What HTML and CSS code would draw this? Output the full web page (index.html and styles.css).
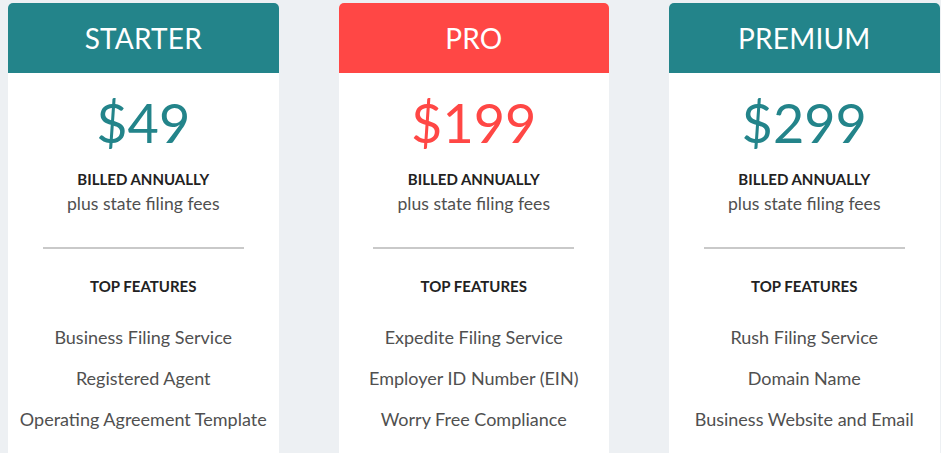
FILE: index.html
```html
<!DOCTYPE html>
<html lang="en">
<head>
<meta charset="utf-8">
<title>Pricing</title>
<link rel="stylesheet" href="styles.css">
</head>
<body>
<div class="plans">
  <div class="card">
    <div class="card-head teal">STARTER</div>
    <div class="price teal-text">$49</div>
    <div class="billed">BILLED ANNUALLY</div>
    <div class="fees">plus state filing fees</div>
    <div class="divider"></div>
    <div class="top">TOP FEATURES</div>
    <ul class="features">
      <li>Business Filing Service</li>
      <li>Registered Agent</li>
      <li>Operating Agreement Template</li>
    </ul>
  </div>
  <div class="card">
    <div class="card-head red">PRO</div>
    <div class="price red-text">$199</div>
    <div class="billed">BILLED ANNUALLY</div>
    <div class="fees">plus state filing fees</div>
    <div class="divider"></div>
    <div class="top">TOP FEATURES</div>
    <ul class="features">
      <li>Expedite Filing Service</li>
      <li>Employer ID Number (EIN)</li>
      <li>Worry Free Compliance</li>
    </ul>
  </div>
  <div class="card">
    <div class="card-head teal">PREMIUM</div>
    <div class="price teal-text">$299</div>
    <div class="billed">BILLED ANNUALLY</div>
    <div class="fees">plus state filing fees</div>
    <div class="divider"></div>
    <div class="top">TOP FEATURES</div>
    <ul class="features">
      <li>Rush Filing Service</li>
      <li>Domain Name</li>
      <li>Business Website and Email</li>
    </ul>
  </div>
</div>
</body>
</html>
```
FILE: styles.css
```css
html, body {
  margin: 0;
  padding: 0;
  background: #edf0f3;
  font-family: Lato, "Open Sans", sans-serif;
  overflow: hidden;
}
.plans {
  display: grid;
  grid-template-columns: 270.5px 270.5px 270.5px;
  column-gap: 60px;
  padding: 3px 0 0 8px;
  height: 450px;
}
.card {
  background: #fff;
  border-radius: 5px 5px 0 0;
  text-align: center;
  overflow: hidden;
}
.card-head {
  height: 70px;
  display: flex;
  align-items: center;
  justify-content: center;
  color: #fff;
  font-size: 28px;
  font-weight: 400;
  letter-spacing: 0.2px;
}
.teal { background: #23848a; }
.red { background: #ff4745; }
.teal-text { color: #23848a; }
.red-text { color: #ff4745; }
.price {
  font-size: 54px;
  line-height: 64px;
  margin-top: 18px;
}
.billed {
  margin-top: 15px;
  font-size: 15px;
  font-weight: 700;
  line-height: 18px;
  color: #222;
}
.fees {
  margin-top: 3px;
  font-size: 17.6px;
  line-height: 25px;
  color: #505050;
}
.divider {
  width: 201px;
  height: 2px;
  background: #c9c9c9;
  margin: 31px auto 0;
}
.top {
  margin-top: 28px;
  font-size: 15px;
  font-weight: 700;
  line-height: 18px;
  color: #222;
}
.features {
  list-style: none;
  margin: 22px 0 0;
  padding: 0;
}
.features li {
  font-size: 18px;
  line-height: 41px;
  color: #505050;
}
```
